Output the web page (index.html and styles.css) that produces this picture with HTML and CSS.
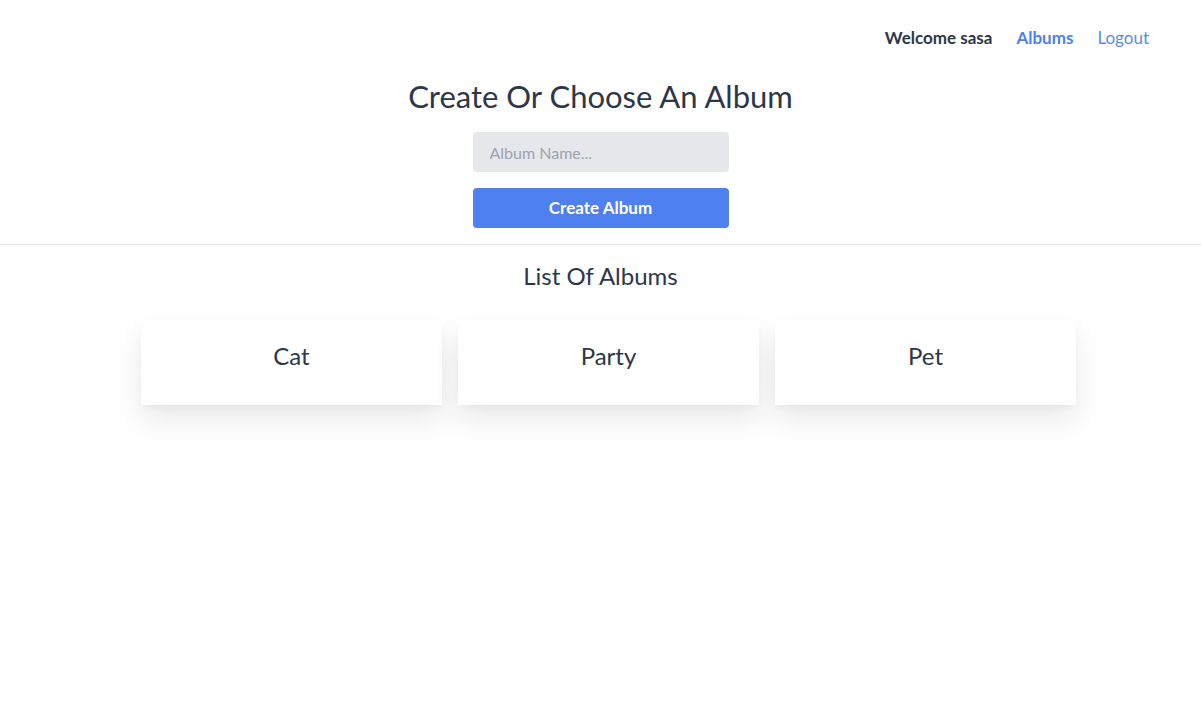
FILE: index.html
```html
<!DOCTYPE html>
<html>
<head>
<meta charset="utf-8">
<link rel="stylesheet" href="styles.css">
</head>
<body>
<nav class="nav">
  <span class="welcome">Welcome sasa</span>
  <a class="link active" href="#">Albums</a>
  <a class="link" href="#">Logout</a>
</nav>
<section class="create">
  <h1 class="title">Create Or Choose An Album</h1>
  <input class="input" type="text" placeholder="Album Name...">
  <button class="btn">Create Album</button>
</section>
<section class="list">
  <h2 class="subtitle">List Of Albums</h2>
  <div class="cards">
    <div class="card">Cat</div>
    <div class="card">Party</div>
    <div class="card">Pet</div>
  </div>
</section>
</body>
</html>
```
FILE: styles.css
```css
* { box-sizing: border-box; }
html, body { min-height: 100%; }
body {
  margin: 0;
  min-height: 725px;
  font-family: Lato, "Open Sans", sans-serif;
  color: #2d3748;
  background: #fff;
}
.nav {
  display: flex;
  justify-content: flex-end;
  align-items: center;
  gap: 24px;
  height: 75px;
  padding-right: 52px;
  font-size: 17px;
}
.welcome { font-weight: 700; color: #2d3748; }
.link { color: #5a8aef; text-decoration: none; }
.link.active { font-weight: 700; color: #4f80ef; }
.create {
  display: flex;
  flex-direction: column;
  align-items: center;
  border-bottom: 1px solid #e5e7eb;
  padding-bottom: 16px;
}
.title {
  margin: 1px 0 16px;
  font-size: 31px;
  font-weight: 400;
  line-height: 40px;
}
.input {
  width: 256px;
  height: 40px;
  border: none;
  border-radius: 4px;
  background: #e5e7eb;
  padding: 0 17px;
  font-family: inherit;
  font-size: 16px;
  color: #2d3748;
}
.input::placeholder { color: #9ca3af; }
.btn {
  margin-top: 16px;
  width: 256px;
  height: 40px;
  padding-bottom: 2px;
  border: none;
  border-radius: 4px;
  background: #4f80ef;
  color: #fff;
  font-family: inherit;
  font-size: 17px;
  font-weight: 700;
}
.list {
  display: flex;
  flex-direction: column;
  align-items: center;
}
.subtitle {
  margin: 15px 0 28px;
  font-size: 24px;
  font-weight: 400;
  line-height: 32px;
}
.cards {
  display: flex;
  gap: 16px;
  margin-left: 16px;
}
.card {
  width: 301px;
  height: 85px;
  padding-top: 20px;
  line-height: 32px;
  text-align: center;
  font-size: 24px;
  background: #fff;
  box-shadow: 0 15px 30px rgba(0,0,0,0.09), 0 4px 8px -2px rgba(0,0,0,0.04);
}
```
